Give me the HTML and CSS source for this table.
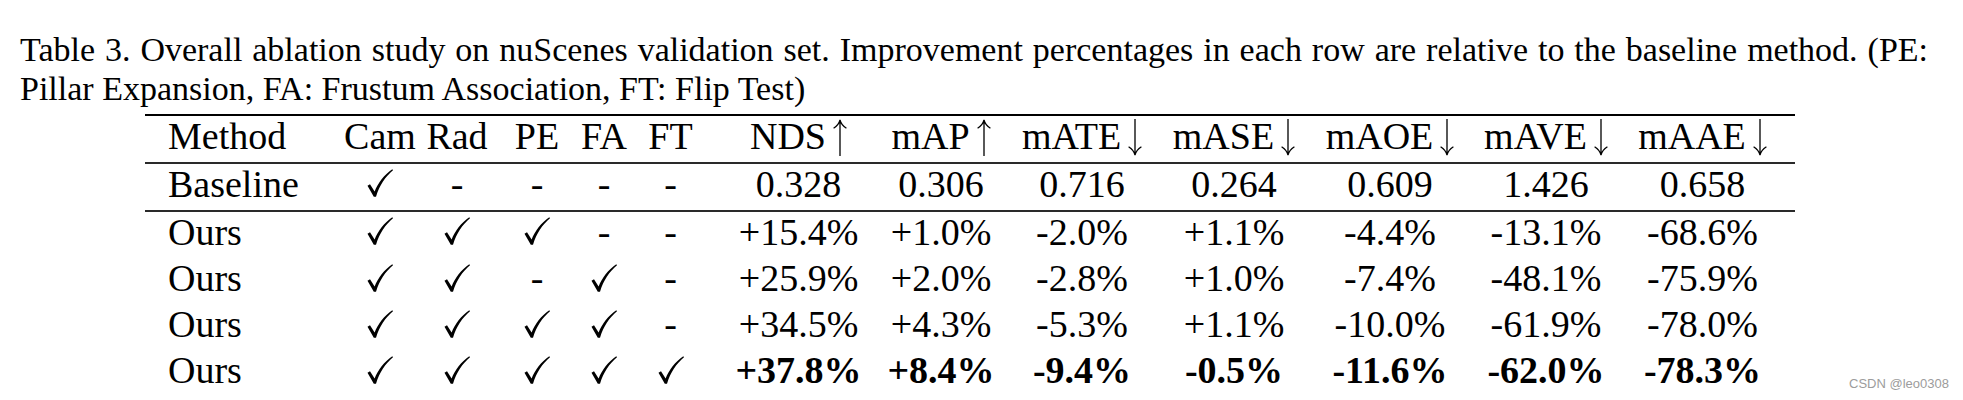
FILE: index.html
```html
<!DOCTYPE html>
<html>
<head>
<meta charset="utf-8">
<link rel="stylesheet" href="styles.css">
</head>
<body>
<div class="page">
  <div class="caption">
    <span class="cap-line just">Table 3. Overall ablation study on nuScenes validation set. Improvement percentages in each row are relative to the baseline method. (PE:</span>
    <span class="cap-line">Pillar Expansion, FA: Frustum Association, FT: Flip Test)</span>
  </div>

  <div class="table">
    <div class="row head">
      <div class="c m">Method</div>
      <div class="c">Cam</div>
      <div class="c">Rad</div>
      <div class="c">PE</div>
      <div class="c">FA</div>
      <div class="c">FT</div>
      <div class="c">NDS<svg class="arrow" viewBox="0 0 14 37"><path d="M7 1.5V37M7 0.8C6.2 4.2 3.8 7.2 0.6 9.2M7 0.8C7.8 4.2 10.2 7.2 13.4 9.2"/></svg></div>
      <div class="c">mAP<svg class="arrow" viewBox="0 0 14 37"><path d="M7 1.5V37M7 0.8C6.2 4.2 3.8 7.2 0.6 9.2M7 0.8C7.8 4.2 10.2 7.2 13.4 9.2"/></svg></div>
      <div class="c">mATE<svg class="arrow" viewBox="0 0 14 37"><path d="M7 0V35.5M7 36.2C6.2 32.8 3.8 29.8 0.6 27.8M7 36.2C7.8 32.8 10.2 29.8 13.4 27.8"/></svg></div>
      <div class="c">mASE<svg class="arrow" viewBox="0 0 14 37"><path d="M7 0V35.5M7 36.2C6.2 32.8 3.8 29.8 0.6 27.8M7 36.2C7.8 32.8 10.2 29.8 13.4 27.8"/></svg></div>
      <div class="c">mAOE<svg class="arrow" viewBox="0 0 14 37"><path d="M7 0V35.5M7 36.2C6.2 32.8 3.8 29.8 0.6 27.8M7 36.2C7.8 32.8 10.2 29.8 13.4 27.8"/></svg></div>
      <div class="c">mAVE<svg class="arrow" viewBox="0 0 14 37"><path d="M7 0V35.5M7 36.2C6.2 32.8 3.8 29.8 0.6 27.8M7 36.2C7.8 32.8 10.2 29.8 13.4 27.8"/></svg></div>
      <div class="c last">mAAE<svg class="arrow" viewBox="0 0 14 37"><path d="M7 0V35.5M7 36.2C6.2 32.8 3.8 29.8 0.6 27.8M7 36.2C7.8 32.8 10.2 29.8 13.4 27.8"/></svg></div>
    </div>

    <div class="row rule">
      <div class="c m">Baseline</div>
      <div class="c"><svg class="check" viewBox="0 0 26 28"><path d="M0.5 16.8L3 15.2L7.6 22.6C11 14 17 6 25.3 0.3L26 1.2C18.5 7.5 12.5 16 9 27.8L6.8 27.8Z"/></svg></div>
      <div class="c">-</div>
      <div class="c">-</div>
      <div class="c">-</div>
      <div class="c">-</div>
      <div class="c">0.328</div>
      <div class="c">0.306</div>
      <div class="c">0.716</div>
      <div class="c">0.264</div>
      <div class="c">0.609</div>
      <div class="c">1.426</div>
      <div class="c last">0.658</div>
    </div>

    <div class="row rule">
      <div class="c m">Ours</div>
      <div class="c"><svg class="check" viewBox="0 0 26 28"><path d="M0.5 16.8L3 15.2L7.6 22.6C11 14 17 6 25.3 0.3L26 1.2C18.5 7.5 12.5 16 9 27.8L6.8 27.8Z"/></svg></div>
      <div class="c"><svg class="check" viewBox="0 0 26 28"><path d="M0.5 16.8L3 15.2L7.6 22.6C11 14 17 6 25.3 0.3L26 1.2C18.5 7.5 12.5 16 9 27.8L6.8 27.8Z"/></svg></div>
      <div class="c"><svg class="check" viewBox="0 0 26 28"><path d="M0.5 16.8L3 15.2L7.6 22.6C11 14 17 6 25.3 0.3L26 1.2C18.5 7.5 12.5 16 9 27.8L6.8 27.8Z"/></svg></div>
      <div class="c">-</div>
      <div class="c">-</div>
      <div class="c">+15.4%</div>
      <div class="c">+1.0%</div>
      <div class="c">-2.0%</div>
      <div class="c">+1.1%</div>
      <div class="c">-4.4%</div>
      <div class="c">-13.1%</div>
      <div class="c last">-68.6%</div>
    </div>

    <div class="row">
      <div class="c m">Ours</div>
      <div class="c"><svg class="check" viewBox="0 0 26 28"><path d="M0.5 16.8L3 15.2L7.6 22.6C11 14 17 6 25.3 0.3L26 1.2C18.5 7.5 12.5 16 9 27.8L6.8 27.8Z"/></svg></div>
      <div class="c"><svg class="check" viewBox="0 0 26 28"><path d="M0.5 16.8L3 15.2L7.6 22.6C11 14 17 6 25.3 0.3L26 1.2C18.5 7.5 12.5 16 9 27.8L6.8 27.8Z"/></svg></div>
      <div class="c">-</div>
      <div class="c"><svg class="check" viewBox="0 0 26 28"><path d="M0.5 16.8L3 15.2L7.6 22.6C11 14 17 6 25.3 0.3L26 1.2C18.5 7.5 12.5 16 9 27.8L6.8 27.8Z"/></svg></div>
      <div class="c">-</div>
      <div class="c">+25.9%</div>
      <div class="c">+2.0%</div>
      <div class="c">-2.8%</div>
      <div class="c">+1.0%</div>
      <div class="c">-7.4%</div>
      <div class="c">-48.1%</div>
      <div class="c last">-75.9%</div>
    </div>

    <div class="row">
      <div class="c m">Ours</div>
      <div class="c"><svg class="check" viewBox="0 0 26 28"><path d="M0.5 16.8L3 15.2L7.6 22.6C11 14 17 6 25.3 0.3L26 1.2C18.5 7.5 12.5 16 9 27.8L6.8 27.8Z"/></svg></div>
      <div class="c"><svg class="check" viewBox="0 0 26 28"><path d="M0.5 16.8L3 15.2L7.6 22.6C11 14 17 6 25.3 0.3L26 1.2C18.5 7.5 12.5 16 9 27.8L6.8 27.8Z"/></svg></div>
      <div class="c"><svg class="check" viewBox="0 0 26 28"><path d="M0.5 16.8L3 15.2L7.6 22.6C11 14 17 6 25.3 0.3L26 1.2C18.5 7.5 12.5 16 9 27.8L6.8 27.8Z"/></svg></div>
      <div class="c"><svg class="check" viewBox="0 0 26 28"><path d="M0.5 16.8L3 15.2L7.6 22.6C11 14 17 6 25.3 0.3L26 1.2C18.5 7.5 12.5 16 9 27.8L6.8 27.8Z"/></svg></div>
      <div class="c">-</div>
      <div class="c">+34.5%</div>
      <div class="c">+4.3%</div>
      <div class="c">-5.3%</div>
      <div class="c">+1.1%</div>
      <div class="c">-10.0%</div>
      <div class="c">-61.9%</div>
      <div class="c last">-78.0%</div>
    </div>

    <div class="row">
      <div class="c m">Ours</div>
      <div class="c"><svg class="check" viewBox="0 0 26 28"><path d="M0.5 16.8L3 15.2L7.6 22.6C11 14 17 6 25.3 0.3L26 1.2C18.5 7.5 12.5 16 9 27.8L6.8 27.8Z"/></svg></div>
      <div class="c"><svg class="check" viewBox="0 0 26 28"><path d="M0.5 16.8L3 15.2L7.6 22.6C11 14 17 6 25.3 0.3L26 1.2C18.5 7.5 12.5 16 9 27.8L6.8 27.8Z"/></svg></div>
      <div class="c"><svg class="check" viewBox="0 0 26 28"><path d="M0.5 16.8L3 15.2L7.6 22.6C11 14 17 6 25.3 0.3L26 1.2C18.5 7.5 12.5 16 9 27.8L6.8 27.8Z"/></svg></div>
      <div class="c"><svg class="check" viewBox="0 0 26 28"><path d="M0.5 16.8L3 15.2L7.6 22.6C11 14 17 6 25.3 0.3L26 1.2C18.5 7.5 12.5 16 9 27.8L6.8 27.8Z"/></svg></div>
      <div class="c"><svg class="check" viewBox="0 0 26 28"><path d="M0.5 16.8L3 15.2L7.6 22.6C11 14 17 6 25.3 0.3L26 1.2C18.5 7.5 12.5 16 9 27.8L6.8 27.8Z"/></svg></div>
      <div class="c b">+37.8%</div>
      <div class="c b">+8.4%</div>
      <div class="c b">-9.4%</div>
      <div class="c b">-0.5%</div>
      <div class="c b">-11.6%</div>
      <div class="c b">-62.0%</div>
      <div class="c b last">-78.3%</div>
    </div>
  </div>

  <div class="watermark">CSDN @leo0308</div>
</div>
</body>
</html>
```

FILE: styles.css
```css
html, body {
  margin: 0;
  padding: 0;
  background: #ffffff;
}

.page {
  position: relative;
  width: 1963px;
  height: 400px;
  overflow: hidden;
  font-family: "Liberation Serif", "Times New Roman", serif;
  color: #000;
}

.caption {
  padding: 29.5px 0 0 20px;
  font-size: 34px;
  line-height: 39.5px;
}

.cap-line {
  display: block;
  white-space: nowrap;
}

.cap-line.just {
  width: 1908px;
  white-space: normal;
  text-align: justify;
  text-align-last: justify;
}

.table {
  width: 1650px;
  margin: 5px 0 0 145px;
  font-size: 38px;
}

.row {
  display: grid;
  grid-template-columns: 195px 80px 74px 86px 48px 85px 171px 114px 168px 136px 176px 136px 181px;
  line-height: 40px;
  padding-bottom: 6.2px;
}

.head {
  border-top: 2px solid #000;
}

.rule {
  border-top: 2px solid #2a2a2a;
}

.c {
  display: flex;
  justify-content: center;
  align-items: baseline;
  white-space: nowrap;
}

.c.m {
  justify-content: flex-start;
  padding-left: 23px;
}

.c.last {
  padding-right: 4px;
}

.b {
  font-weight: bold;
}

.check {
  width: 26px;
  height: 28px;
  fill: #000;
  align-self: flex-end;
  margin-bottom: 6.5px;
}

.arrow {
  width: 14px;
  height: 37px;
  margin-left: 7px;
  fill: none;
  stroke: #000;
  stroke-width: 1.3;
  align-self: flex-start;
  margin-top: 3px;
}

.watermark {
  position: absolute;
  left: 1849px;
  top: 375.5px;
  font-family: "Liberation Sans", Arial, sans-serif;
  font-size: 13px;
  line-height: 15px;
  color: #9c9c9c;
  white-space: nowrap;
}
```
